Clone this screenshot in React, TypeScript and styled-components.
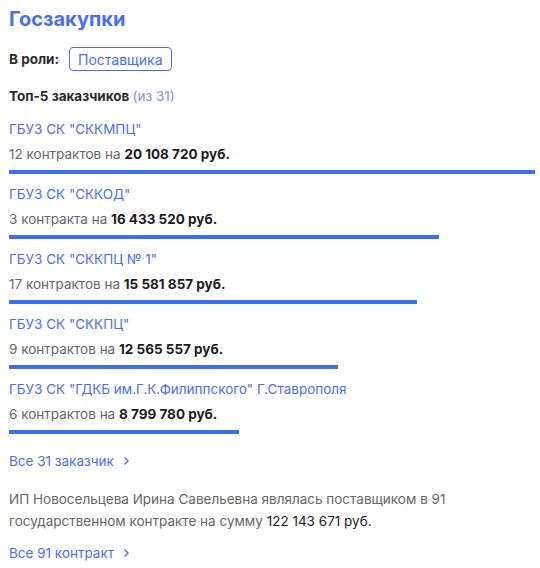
import React from 'react';
import styled, { createGlobalStyle } from 'styled-components';

const GlobalStyle = createGlobalStyle`
  body {
    margin: 0;
    background: #ffffff;
    font-family: Inter, "Noto Sans", Arial, sans-serif;
    color: #2b2b2b;
  }
`;

const Page = styled.div`
  width: 540px;
  padding: 6px 5px 0 9px;
  box-sizing: border-box;
`;

const Title = styled.h1`
  margin: 0;
  font-size: 20px;
  line-height: 26px;
  font-weight: 700;
  color: #4b6df5;
`;

const RoleRow = styled.div`
  display: flex;
  align-items: center;
  gap: 10px;
  margin-top: 15px;
`;

const RoleLabel = styled.span`
  font-size: 13.5px;
  font-weight: 700;
  color: #2b2b2b;
`;

const RoleButton = styled.button`
  height: 24px;
  padding: 0 8px;
  border: 1px solid #4b6df5;
  border-radius: 4px;
  background: #fff;
  color: #4b6df5;
  font-family: inherit;
  font-size: 14px;
  cursor: pointer;
`;

const Subtitle = styled.div`
  margin-top: 15px;
  font-size: 13.5px;
  font-weight: 700;
  line-height: 20px;
  color: #2b2b2b;

  span {
    font-weight: 400;
    color: #7f8ff0;
  }
`;

const List = styled.div`
  display: flex;
  flex-direction: column;
  gap: 10px;
  margin-top: 13px;
`;

const Item = styled.div`
  display: flex;
  flex-direction: column;
`;

const Name = styled.a`
  font-size: 13.5px;
  line-height: 20px;
  color: #4b6df5;
  text-decoration: none;
`;

const Details = styled.div`
  margin-top: 5px;
  font-size: 13.5px;
  line-height: 20px;
  color: #666;

  b {
    font-weight: 700;
    color: #1c1c1c;
  }
`;

const Bar = styled.div`
  height: 4px;
  margin-top: 6px;
  background: #3a6ff2;
`;

const MoreLink = styled.a<{ $top: number }>`
  display: inline-flex;
  align-items: center;
  gap: 9px;
  margin-top: ${(p) => p.$top}px;
  font-size: 13.5px;
  line-height: 20px;
  color: #4b6df5;
  text-decoration: none;
`;

const Summary = styled.p`
  margin: 17px 0 0;
  font-size: 13.5px;
  line-height: 22px;
  color: #666;

  b {
    font-weight: 400;
    color: #1c1c1c;
  }
`;

const Chevron = () => (
  <svg width="7" height="10" viewBox="0 0 7 10" fill="none">
    <path d="M1.5 1.5 L5 5 L1.5 8.5" stroke="#4b6df5" strokeWidth="1.4" />
  </svg>
);

const customers = [
  { name: 'ГБУЗ СК "СККМПЦ"', count: '12 контрактов', sum: 20108720 },
  { name: 'ГБУЗ СК "СККОД"', count: '3 контракта', sum: 16433520 },
  { name: 'ГБУЗ СК "СККПЦ № 1"', count: '17 контрактов', sum: 15581857 },
  { name: 'ГБУЗ СК "СККПЦ"', count: '9 контрактов', sum: 12565557 },
  { name: 'ГБУЗ СК "ГДКБ им.Г.К.Филиппского" Г.Ставрополя', count: '6 контрактов', sum: 8799780 },
];

const fmt = (n: number) => n.toString().replace(/\B(?=(\d{3})+(?!\d))/g, ' ');

const App: React.FC = () => {
  const max = customers[0].sum;
  return (
    <Page>
      <GlobalStyle />
      <Title>Госзакупки</Title>
      <RoleRow>
        <RoleLabel>В роли:</RoleLabel>
        <RoleButton>Поставщика</RoleButton>
      </RoleRow>
      <Subtitle>
        Топ-5 заказчиков <span>(из 31)</span>
      </Subtitle>
      <List>
        {customers.map((c) => (
          <Item key={c.name}>
            <Name href="#">{c.name}</Name>
            <Details>
              {c.count} на <b>{fmt(c.sum)} руб.</b>
            </Details>
            <Bar style={{ width: `${(c.sum / max) * 100}%` }} />
          </Item>
        ))}
      </List>
      <MoreLink href="#" $top={17}>
        Все 31 заказчик <Chevron />
      </MoreLink>
      <Summary>
        ИП Новосельцева Ирина Савельевна являлась поставщиком в 91 государственном контракте на сумму{' '}
        <b>122 143 671 руб.</b>
      </Summary>
      <MoreLink href="#" $top={11}>
        Все 91 контракт <Chevron />
      </MoreLink>
    </Page>
  );
};

export default App;
